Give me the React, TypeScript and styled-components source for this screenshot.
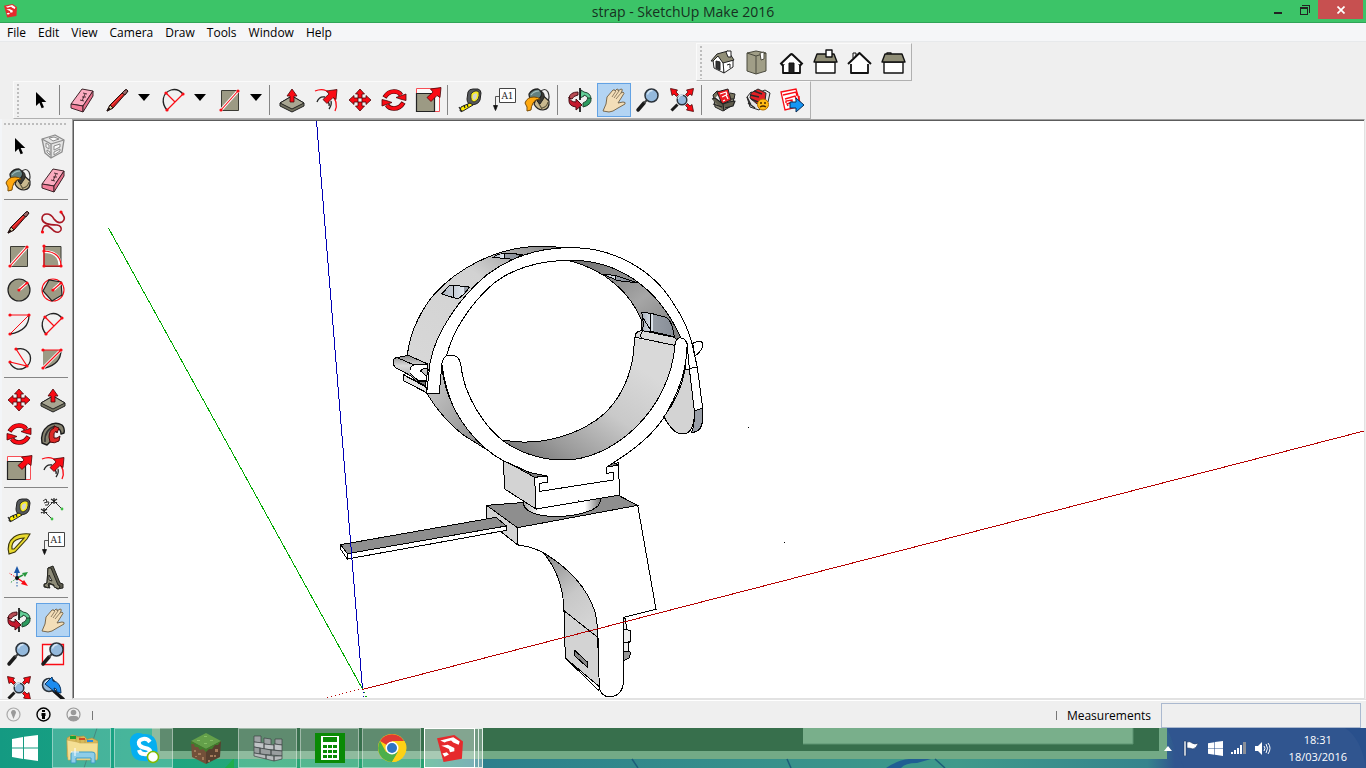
import React from "react";
import styled, { createGlobalStyle, css } from "styled-components";

const GlobalStyle = createGlobalStyle`
  * { box-sizing: border-box; }
  body { margin: 0; font-family: "Open Sans", "Noto Sans", sans-serif; color: #000; }
  button, input { font: inherit; color: inherit; }
  button { border: 0; padding: 0; background: none; }
`;

/* ---------- window frame ---------- */

const Screen = styled.div`
  display: flex;
  flex-direction: column;
  height: 100vh;
  overflow: hidden;
  background: #efefef;
`;

const TitleBar = styled.header`
  display: grid;
  grid-template-columns: 1fr auto 1fr;
  height: 23px;
  flex: none;
  background: #3cc468;
  border-bottom: 1px solid #2fa457;
`;

const TitleIcon = styled.div`
  padding: 4px 0 0 4px;
  line-height: 0;
`;

const Title = styled.h1`
  margin: 0;
  font-size: 14px;
  line-height: 23px;
  font-weight: 400;
  color: #16301f;
`;

const WindowButtons = styled.div`
  display: flex;
  justify-content: flex-end;
  align-items: flex-start;
  padding-right: 3px;
`;

const WindowButton = styled.button<{ $close?: boolean }>`
  display: grid;
  place-items: center;
  width: ${(p) => (p.$close ? 45 : 27)}px;
  height: 19px;
  background: ${(p) => (p.$close ? "#c75050" : "transparent")};
`;

const MenuBar = styled.nav`
  display: flex;
  flex: none;
  gap: 12px;
  height: 19px;
  padding-left: 7px;
  background: #f5f6f8;
  border-bottom: 1px solid #e7e9eb;
`;

const MenuItem = styled.button`
  font-size: 12px;
  line-height: 20px;
`;

/* ---------- toolbars ---------- */

const Toolbars = styled.div`
  flex: none;
  display: flex;
  flex-direction: column;
  align-items: flex-start;
  height: 77px;
  padding-top: 1px;
`;

const ToolbarBox = styled.div<{ $indent: number }>`
  display: flex;
  align-items: center;
  height: 38px;
  margin-left: ${(p) => p.$indent}px;
  padding: 0 1px 0 3px;
  background: #f1f1f1;
  border: 1px solid;
  border-color: #fafafa #b0b0b0 #b0b0b0 #fafafa;
`;

const dots = css<{ $across?: boolean }>`
  background: ${(p) =>
    p.$across
      ? "repeating-linear-gradient(90deg, #bdbdbd 0 2px, transparent 2px 4px)"
      : "repeating-linear-gradient(180deg, #bdbdbd 0 2px, transparent 2px 4px)"};
`;

const Grip = styled.div`
  ${dots}
  flex: none;
  width: 2px;
  height: 33px;
  margin-right: 4px;
`;

const SideGrip = styled.div`
  ${dots}
  height: 2px;
  margin: 4px 2px;
`;

const ToolButton = styled.button<{ $active?: boolean }>`
  display: grid;
  place-items: center;
  flex: none;
  width: 34px;
  height: 34px;
  border: 1px solid ${(p) => (p.$active ? "#62a2e4" : "transparent")};
  background: ${(p) => (p.$active ? "#b3d4f3" : "transparent")};
`;

const SplitTool = styled.div`
  display: flex;
  padding-left: 2px;
`;

const DropButton = styled.button`
  display: grid;
  place-items: center;
  width: 20px;
  height: 29px;
  padding-right: 2px;
`;

const Divider = styled.div`
  flex: none;
  width: 1px;
  height: 30px;
  margin: 0 5px 0 2px;
  background: #858585;
`;

const SideDivider = styled.div`
  height: 1px;
  margin: 2px 2px 5px;
  background: #858585;
`;

const Workspace = styled.main`
  display: flex;
  flex: 1;
  min-height: 0;
  border-bottom: 1px solid #e2e2e2;
`;

const Sidebar = styled.aside`
  flex: none;
  width: 72px;
  padding-right: 2px;
  overflow: hidden;
  background: #f1f1f1;
  border-left: 2px solid #f3f5f8;
`;

const ToolGrid = styled.div`
  display: grid;
  grid-template-columns: 34px 34px;
`;

const Viewport = styled.section`
  flex: 1;
  min-width: 0;
  margin-right: 1px;
  padding: 1px 0 0 1px;
  background: #fff;
  border: 1px solid;
  border-color: #a0a0a0 #e2e2e2 #e2e2e2 #a0a0a0;
  box-shadow: inset 1px 1px #5c5c5c;
`;

const Scene = styled.svg`
  display: block;
  width: 100%;
  height: 100%;
`;

/* ---------- status bar ---------- */

const StatusBar = styled.footer`
  display: flex;
  align-items: center;
  flex: none;
  height: 28px;
  padding: 2px 5px 0 6px;
  border-top: 1px solid #fff;
`;

const StatusGroup = styled.div`
  display: flex;
  align-items: center;
  gap: 15px;
  padding-bottom: 2px;
`;

const StatusButton = styled.button`
  width: 15px;
  height: 15px;
  line-height: 0;
`;

const Tick = styled.span`
  width: 1px;
  height: 9px;
  margin-left: 11px;
  background: #777;
`;

const MeasureLabel = styled.label`
  margin-left: auto;
  display: flex;
  align-items: center;
  gap: 10px;
  font-size: 12px;
`;

const MeasureInput = styled.input`
  width: 200px;
  height: 25px;
  border: 1px solid #abb9cf;
  background: #efefef;
`;

/* ---------- taskbar ---------- */

const Taskbar = styled.div`
  position: relative;
  display: flex;
  flex: none;
  height: 40px;
  overflow: hidden;
`;

const Wallpaper = styled.svg`
  position: absolute;
  inset: 0;
  width: 100%;
  height: 100%;
`;

const TaskList = styled.div`
  position: relative;
  display: flex;
  gap: 3px;
`;

const StartButton = styled.button`
  width: 49px;
  line-height: 0;
`;

const TaskButton = styled.button<{ $state: "idle" | "open" | "front" }>`
  display: grid;
  place-items: center;
  width: ${(p) => (p.$state === "front" ? 51 : 59)}px;
  height: 40px;
  border: 1px solid
    ${(p) => ({ idle: "transparent", open: "rgba(255,255,255,.4)", front: "#fff" })[p.$state]};
  background: ${(p) =>
    ({ idle: "transparent", open: "rgba(255,255,255,.2)", front: "rgba(255,255,255,.38)" })[p.$state]};
`;

const StackEdge = styled.div`
  width: 4px;
  height: 40px;
  margin-left: -3px;
  border: 1px solid #e3eee7;
  border-left: 0;
  background: rgba(255, 255, 255, 0.3);
`;

const Tray = styled.div`
  position: relative;
  display: flex;
  align-items: center;
  gap: 8px;
  margin-left: auto;
  padding-right: 19px;
`;

const TrayButton = styled.button`
  line-height: 0;
`;

const Clock = styled.time`
  margin-left: 10px;
  font-size: 11px;
  line-height: 17px;
  text-align: center;
  color: #fff;
`;

/* ---------- icons, all on a 24 unit grid ---------- */

const Glyph = styled.svg`
  overflow: visible;
`;

const Icon = ({ children, size = 24 }: { children: React.ReactNode; size?: number }) => (
  <Glyph width={size} height={size} viewBox="0 0 24 24" fill="none" aria-hidden="true">
    {children}
  </Glyph>
);

const RED = "#fa0b14";
const K = "#222";
const TAUPE = "#9c9a84";

const Dots = ({ at }: { at: [number, number][] }) => (
  <>
    {at.map(([x, y]) => (
      <circle key={`${x}-${y}`} cx={x} cy={y} r="1.6" fill={RED} />
    ))}
  </>
);

const ArrowHead = ({ d }: { d: string }) => <path d={d} fill={RED} stroke="#4a0508" strokeWidth=".8" />;

const Select = () => (
  <path d="M8 4v14l3.400-3.200 2.200 5.400 2.400-1-2.300-5.200h4.600z" fill="#000" />
);
const Eraser = () => (
  <g stroke="#3d2329" strokeWidth="1" strokeLinejoin="round">
    <path d="M1 16L12 1l11 2-10 15z" fill="#fbacc0" />
    <path d="M1 16l12 2v6L1 20z" fill="#f37f9a" />
    <path d="M23 3v5L13 24v-6z" fill="#e8708c" />
    <path d="M13 5l4 1M10 12l4 1M15 6l-3 7M12 9l4 0" strokeWidth=".9" />
  </g>
);
const Pencil = () => (
  <g stroke="#241212" strokeLinejoin="round">
    <path d="M1 23l3-6L19 2q2-1 3 1L7 20z" fill="#d31c1c" />
    <path d="M1 23l3-6 3 3z" fill="#d8cda0" />
    <path d="M19 2q2-1 3 1l-3 4-3-2z" fill="#9c6a6a" />
    <path d="M1 23l2-3 1 1z" fill="#111" />
    <path d="M6 17L17 6" stroke="#ff5a50" strokeWidth=".8" />
  </g>
);
const Pie = () => (
  <>
    <path d="M5 22C-1 15 0 5 9 2q7-2 12 4" stroke={K} strokeWidth="1.300" />
    <path d="M4 5l9 9M5 22L21 6" stroke={RED} strokeWidth="1.200" />
    <Dots at={[[4, 5], [21, 6], [5, 22]]} />
  </>
);
const Rect = () => (
  <>
    <path d="M3.500 2.500h17v20h-17z" fill={TAUPE} stroke="#3b3b34" />
    <path d="M3 22L20 3" stroke="#fff" strokeWidth="3" />
    <path d="M3 22L20 3" stroke={RED} strokeWidth="1.100" />
    <Dots at={[[3, 22], [20, 3]]} />
  </>
);
const PushPull = () => (
  <>
    <path d="M0 15l12-7 12 7v3l-12 6-12-6z" fill="#737260" stroke={K} />
    <path d="M0 15l12-7 12 7-12 6z" fill="#a8a692" stroke={K} />
    <ArrowHead d="M12 1l5 7h-3v6h-4V8H7z" />
  </>
);
const NorthEast = () => <ArrowHead d="M10 9.500L16 4l-2.500-3L24-.5 23 9.500 20 7.500 14 13.500z" />;
const Offset = () => (
  <>
    <path d="M1 3q9-4 16 3 8 8 4 17" stroke={RED} strokeWidth="1.300" />
    <path d="M3 14q2-6 8-5M17 13q1 4-2 8M10 12q6 1 5 6" stroke={K} strokeWidth="1.300" />
    <g transform="translate(-1 2)"><NorthEast /></g>
  </>
);
const Move = () => (
  <>
    {[0, 90, 180, 270].map((a) => (
      <g key={a} transform={`rotate(${a} 12 12)`}>
        <ArrowHead d="M12 1l4.500 5H14v4h-4V6H7.500z" />
      </g>
    ))}
  </>
);
const Rotate = () => (
  <>
    {[0, 180].map((a) => (
      <g key={a} transform={`rotate(${a} 12 12)`}>
        <path d="M2.500 9.500Q6 3.500 12 3.500q5 0 7 3.500" stroke="#4a0508" strokeWidth="4.600" />
        <path d="M3 9Q6 3.500 12 3.500q5 0 7 3.500" stroke={RED} strokeWidth="3.400" />
        <ArrowHead d="M14 9.500L24 6v6.500q-5-1-10-3z" />
      </g>
    ))}
  </>
);
const Scale = () => (
  <>
    <path d="M.5.5h23v23H.5z" fill="#fff" stroke={RED} opacity=".7" />
    <path d="M.5 5.500h18v18H.5z" fill={TAUPE} stroke={K} strokeWidth="1.200" />
    <g transform="translate(1 0)"><NorthEast /></g>
  </>
);
const Tape = () => (
  <g strokeLinejoin="round">
    <path d="M10 4q1-3 5-3l5 0q3 1 3 4l-1 7q-1 3-4 4l-4 1q-5-1-5-6z" fill="#55585c" stroke={K} />
    <path d="M13 6q4-5 8-2 1 8-5 10-4-1-3-8z" fill="#f7ec22" stroke={K} strokeWidth=".8" />
    <path d="M15 7q3-3 4-1 0 5-3 6-2-1-1-5z" fill="#d5d6d0" />
    <path d="M12 15l-9 4-1 4 3 0 10-6z" fill="#ffee00" stroke={K} />
    <path d="M1 19l3 5M6 17l1 3M9 16l1 3" stroke={K} strokeWidth="1.200" />
  </g>
);
const TextTool = () => (
  <>
    <path d="M7.500.5h16v14h-16z" fill="#fff" stroke="#444" />
    <path d="M7 8.500H3.500V18" stroke="#555" />
    <path d="M1.500 17.500h4l-2 5z" fill="#111" stroke="#111" strokeWidth=".8" />
    <text x="15.500" y="11" textAnchor="middle" fontFamily="DejaVu Serif, serif" fontSize="9" fill="#222">A1</text>
  </>
);
const Paint = () => (
  <g strokeLinejoin="round">
    <path d="M14 4q5-5 8 0 2 5 0 9" stroke="#333" strokeWidth="1.200" />
    <path d="M13 4l10 9q1 8-6 9-6 0-9-6z" fill="#c9b98f" stroke={K} strokeWidth="1.200" />
    <path d="M16 20q5-1 6-6M12 14l4 7" stroke="#5b543c" strokeWidth="1.200" />
    <path d="M3 6q3-5 9-5 4 2 4 6-3 5-9 6-4-2-4-7z" fill="#62807f" stroke={K} strokeWidth="1.300" />
    <path d="M5 7q3-4 8-4" stroke="#a8c0c0" strokeWidth="1.200" />
    <path d="M15 3q4 2 3 7l-4 6-3-3q6-4 4-10z" fill="#3a3a33" stroke={K} />
    <path d="M-1 15q2-6 9-6 4 0 6 2-5 0-7 4-2 4-2 7l-4 1q1-4-2-8z" fill="#ffa90f" stroke="#7a4a00" />
  </g>
);
const Orbit = () => (
  <g strokeLinejoin="round">
    <path d="M13 2l-1 8 4-2v-1q4 1 4 4h3Q23 5 16 4z" fill="#63cf98" stroke="#1d4630" />
    <path d="M23 10q1 7-8 9v-4q4-1 5-5z" fill="#2c9c5f" stroke="#1d4630" />
    <path d="M1 10q1-6 9-6v3q-5 1-6 4z" fill="#b84a52" stroke="#4a0c14" />
    <path d="M1 9q1 5 7 5v-3l6 6-6 5v-3q-7-1-7-6z" fill="#c4192e" stroke="#4a0c14" />
    <path d="M12 0v12M12 19v5" stroke="#111" strokeWidth="1.700" />
  </g>
);
const Hand = () => (
  <path d="M1 23l3-7 1-7 6-7q2-1 2 1l2-2q2 0 1 2l3-2q2 0 1 2l-1 2 2-1q2 1 0 3l-5 8 5-1q3 0 2 2l-7 4-5 3-4 1z" fill="#f3deb8" stroke="#7a6a50" strokeWidth="1" strokeLinejoin="round" />
);
const HandTool = () => (
  <>
    <Hand />
    <path d="M10 9l4-6M12 10l5-7M14 11l5-6" stroke="#7a6a50" strokeWidth=".8" />
  </>
);
const Lens = ({ x = 15.5, y = 7.5, r = 6.5 }: { x?: number; y?: number; r?: number }) => (
  <>
    <circle cx={x} cy={y} r={r} fill="#94b9dc" stroke="#2a323a" strokeWidth="1.500" />
    <path d={`M${x - 4} ${y - 1}q1-4 5-4`} stroke="#d5e6f5" strokeWidth="1.300" />
  </>
);
const Zoom = () => (
  <>
    <path d="M2 22l6-7" stroke="#1b1b1b" strokeWidth="3.500" strokeLinecap="round" />
    <path d="M8 15l4-4" stroke="#444" strokeWidth="2" />
    <Lens />
  </>
);
const ZoomWindow = () => (
  <>
    <path d="M1.500 2.500h21v20h-21z" fill="#fff" fillOpacity=".4" stroke={RED} strokeWidth="1.300" />
    <Zoom />
  </>
);
const ZoomExtents = () => (
  <>
    <path d="M1.500 22.500l6-6" stroke="#1b1b1b" strokeWidth="3" />
    <Lens x={12} y={12} r={4.8} />
    {[0, 90, 180].map((a) => (
      <g key={a} transform={`rotate(${a} 12 12)`}>
        <ArrowHead d="M.5.5l7 1.500L6 4l2.500 2.500-2 2L4 6 2 7.500z" />
      </g>
    ))}
  </>
);
const Previous = () => (
  <>
    <Lens x={8} y={9} r={6.5} />
    <path d="M13 15l9 8" stroke="#151515" strokeWidth="3.500" strokeLinecap="round" />
    <path d="M4 8l7-7 1 4q8 1 8 12l-4-1q0-4-3-4l1 4z" fill="#1b8cf0" stroke="#0b3562" strokeLinejoin="round" />
  </>
);
const Component = () => (
  <g stroke="#8d8d8d" strokeWidth="1.300" strokeLinejoin="round" fill="#e4e4e4">
    <path d="M1 5l13-4 9 5-2 12-11 6-6-5z" />
    <path d="M1 5l9 5 13-4M10 10v14" />
    <path d="M5 9l3 2v4l-3-2zM6 16l3 2v3l-3-3zM13 12l6-2v3l-6 3zM13 18l6-3v2l-6 4zM8 4l5-1 5 2-6 2z" fill="#fafafa" strokeWidth="1" />
  </g>
);
const Freehand = () => (
  <>
    <path d="M1 22q1-8 6-6 3 2 6 5 5 3 7-1 1-4-4-5Q2 15 1 9q0-5 5-5 4 0 7 5 4 5 8 3 4-3 1-7l-2-3" stroke="#a81622" strokeWidth="1.600" />
    <Dots at={[[1.5, 22], [20, 2]]} />
  </>
);
const RotRect = () => (
  <>
    <path d="M3 2.500h17v20H3z" fill={TAUPE} stroke="#3b3b34" />
    <path d="M3 7.500q16 0 16 14" stroke="#fff" strokeWidth="3" />
    <path d="M3 2v20h17q0-14-17-15" stroke={RED} strokeWidth="1.200" />
    <Dots at={[[3, 2], [3, 7], [3, 22], [20, 22]]} />
  </>
);
const Circle = () => (
  <>
    <circle cx="12" cy="12" r="11" fill={TAUPE} stroke={K} strokeWidth="1.200" />
    <path d="M12 12l8-7" stroke="#fff" strokeWidth="3" />
    <path d="M12 12l8-7" stroke={RED} strokeWidth="1.200" />
    <Dots at={[[12, 12], [20, 5]]} />
  </>
);
const Polygon = () => (
  <>
    <circle cx="12" cy="12" r="11" stroke={RED} strokeWidth="1.100" />
    <path d="M20 4l1 13-10 6L2 13 8 2z" fill={TAUPE} stroke={K} strokeWidth="1.200" />
    <path d="M12 12l8-7" stroke="#fff" strokeWidth="3" />
    <path d="M12 12l8-7" stroke={RED} strokeWidth="1.200" />
    <Dots at={[[12, 12], [20, 5]]} />
  </>
);
const Arc = () => (
  <>
    <path d="M22 3q0 16-19 19" stroke={K} strokeWidth="1.300" />
    <path d="M3 3h19L3 22" stroke={RED} />
    <Dots at={[[3, 3], [22, 3], [3, 22]]} />
  </>
);
const Arc3 = () => (
  <>
    <path d="M10 3q9-2 13 6 2 7-3 11-4 4-10 3-5-2-7-6" stroke={K} strokeWidth="1.300" />
    <path d="M3 16l17 4L9 3" stroke={RED} strokeWidth="1.200" />
    <Dots at={[[3, 16], [20, 20], [9, 3]]} />
  </>
);
const PieFill = () => (
  <>
    <path d="M2 4h18q0 14-16 18H2z" fill={TAUPE} />
    <path d="M20 4q0 14-16 18" stroke={K} strokeWidth="1.300" />
    <path d="M2 22L20 4" stroke="#fff" strokeWidth="3" />
    <path d="M2 22L20 4H2" stroke={RED} strokeWidth="1.200" />
    <Dots at={[[2, 22], [20, 4], [2, 4]]} />
  </>
);
const FollowMe = () => (
  <g strokeLinejoin="round">
    <path d="M1 21Q-1 10 7 4q7-5 14-1 3 3 2 8l-3 1q0-6-5-5-6 2-5 12l-4 4z" fill="#86826f" stroke="#1c1c1c" strokeWidth="1.400" />
    <path d="M4 20Q3 8 14 4" stroke="#333" strokeWidth="1.500" />
    <path d="M8 15q0-7 5-9l0-2 5 2-2 5-1-2q-3 2-2 7l3 0 3-2-1 5q-5 3-9 1z" fill="#dd2a26" stroke="#4a0508" />
  </g>
);
const Dimension = () => (
  <>
    <path d="M3 13L13 3M3 13l8 8M13 3l8 8" stroke="#333" />
    <path d="M0 11l6 4M0 15l6-4M10 1l6 4M10 5l6-4M3 10v6M13 0v6" stroke="#222" strokeWidth="1.200" />
    <path d="M2 3l3-2 1 3-3 1M5 4l3 0-1 3-3 0" stroke="#333" />
    <circle cx="11" cy="21" r="1.400" fill="#3dbd43" />
    <circle cx="21" cy="11" r="1.400" fill="#3dbd43" />
  </>
);
const Protractor = () => (
  <path d="M2 22Q-1 11 7 5q6-4 16-3l-3 5L8 20l-6 2zM5 17q-1-6 4-9 4-2 8-2L7 17z" fill="#e8d92f" fillRule="evenodd" stroke="#3b3608" strokeWidth="1.100" />
);
const Axes = () => (
  <>
    <path d="M10 12V5" stroke="#1b57a8" strokeWidth="1.600" />
    <path d="M10 0l3 7H7z" fill="#1b57a8" />
    <path d="M10 12l6-3" stroke="#27963d" strokeWidth="1.500" />
    <path d="M21 6l-3 5-3-4z" fill="#27963d" />
    <path d="M10 12l6 4" stroke={RED} strokeWidth="1.500" />
    <path d="M21 20l-7-2 3-4z" fill={RED} />
    <path d="M10 13v9" stroke="#1b57a8" strokeDasharray="1.500 1.500" />
    <path d="M10 12L2 7" stroke={RED} strokeDasharray="1.500 1.500" />
    <path d="M10 12l-7 5" stroke="#27963d" strokeDasharray="1.500 1.500" />
    <circle cx="10" cy="12" r="2" fill="#111" />
  </>
);
const Text3D = () => (
  <g stroke="#24241f" strokeLinejoin="round">
    <path d="M7 2l5-2 7 17 3 1v4l-6 1-2-3-5-2-1 2 1 2-6-1v-3l3-1z" fill="#5b5a4d" />
    <path d="M7 2h3l7 17 2 1-1 3-5-2v-2l-5-2-1 2 1 1-1 2-4-2 1-2 2-1z" fill="#8d8b78" />
    <path d="M8 9l3 6-3-1z" fill="#f1f1f1" />
  </g>
);

const HouseIso = () => (
  <g stroke={K} strokeLinejoin="round">
    <path d="M2 10l5-6 6 6v13L3 18z" fill="#fff" />
    <path d="M12 12l10-2v7l-9 6z" fill="#fff" />
    <path d="M0 11l6-7L17 1l6 9-11 3L7 6l-5 5z" fill="#918f78" />
    <path d="M15 2l1-1 4 0v6h-3z" fill="#fff" />
    <path d="M5 18v-7l4 1v8z" fill="#333" />
    <path d="M16 15l3-1v4" />
  </g>
);
const HouseTop = () => (
  <g stroke="#4a4a3e" strokeLinejoin="round">
    <path d="M2 3l9-2 10 2v18l-10 3-9-3z" fill="#a09e87" />
    <path d="M2 3l9 3 10-3M11 6v18" />
    <path d="M15 3l4-1v7l-3 1z" fill="#fff" />
  </g>
);
const HouseFront = () => (
  <g stroke="#111" strokeLinejoin="round">
    <path d="M4 12v11h17V12" fill="#fff" strokeWidth="1.800" />
    <path d="M2 15L12.500 5 23 15" stroke="#111" strokeWidth="4" />
    <path d="M4 14l8.500-8 8.500 8" fill="#fff" stroke="#fff" strokeWidth="1.300" />
    <path d="M10 13h5v10h-5z" fill="#222" />
  </g>
);
const HouseRight = () => (
  <g stroke="#111" strokeWidth="1.400" strokeLinejoin="round">
    <path d="M3 12h19v11H3z" fill="#fff" />
    <path d="M4 4h17l3 8H1z" fill="#8f8d76" />
    <path d="M13 0h6v7h-6z" fill="#fff" />
  </g>
);
const HouseBack = () => (
  <g stroke="#111" strokeWidth="1.800" strokeLinejoin="round">
    <path d="M6 8V3h3v3" strokeWidth="1" />
    <path d="M4 13v10h17V13" fill="#fff" />
    <path d="M1 14L12.500 3 24 14" fill="#fff" strokeWidth="2" />
    <path d="M5 12h15v3H5z" fill="#fff" stroke="none" />
  </g>
);
const HouseLeft = () => (
  <g stroke="#111" strokeWidth="1.400" strokeLinejoin="round">
    <path d="M3 12h19v11H3z" fill="#fff" />
    <path d="M4 4h17l3 8H1z" fill="#8f8d76" />
    <path d="M6 4V3h4v1" fill="#777" />
  </g>
);
const Warehouse = () => (
  <g stroke="#222" strokeLinejoin="round">
    <path d="M2 11l7 3 13-6-1 9-10 6-8-4z" fill="#8c8977" />
    <path d="M2 11L1 7l4-4 4 1M18 5l5 1-1 5-4 0" fill="#77745f" />
    <path d="M5 4l11-3 3 11-9 4z" fill="#ee1c23" />
    <path d="M8 6l6-2 1 3M10 9l4-2 2 4M11 13l2-1" stroke="#fff" strokeWidth="1.300" />
    <path d="M0 11l3-1 8 6 1 7M1 16l9 3M11 16l6-2 6-1-2 5-8 2" fill="#5e5b4b" strokeWidth="1.200" />
  </g>
);
const Extension = () => (
  <>
    <g stroke="#292929" strokeLinejoin="round">
      <path d="M1 9l4-5 5 2 9-4 5 3-2 9-9 8-9-3z" fill="#e5e5e5" />
      <path d="M5 5l7-4 8 4-1 8-8 3-7-6z" fill="#e32025" />
      <path d="M4 7l9 2M8 3l8 3M5 11l7 3M2 15l7 5M1 9l4 8" strokeWidth="1.400" />
    </g>
    <circle cx="17" cy="16.500" r="5.500" fill="#ffbb14" stroke="#b06d00" />
    <path d="M14 15h2M18 15h2M14 19q3-2 6 0" stroke="#4a2b00" strokeWidth="1.300" />
  </>
);
const Layout = () => (
  <>
    <path d="M1 4l15-3 5 17-16 4z" fill="#fff" stroke={RED} strokeWidth="1.300" />
    <path d="M3 7l13-3 1 4M5 11l10-3 2 5M6 15v-2l6-1v5M8 18l-1-2 3-1M19 8v8" stroke={RED} strokeWidth="1.400" />
    <path d="M10 14h6v-4l8 7-8 7v-4h-6z" fill="#1696f5" stroke="#0a2b52" />
  </>
);
const SketchUpMark = () => (
  <>
    <path d="M0 3L16 0l8 6-1 16L6 25z" fill="#e62a2c" />
    <path d="M3 5l12-3 6 4-1 3-5-2-2-2-4 1-2 1z" fill="#fff" />
    <path d="M4 10l6-1 6 3v3l-4 1-1-3-4-2z" fill="#fff" />
    <path d="M5 17l4-1 2 2-4 2z" fill="#fff" />
  </>
);

/* ---------- tool lists ---------- */

type Tool = [string, React.ComponentType];

const viewTools: Tool[] = [
  ["Iso", HouseIso], ["Top", HouseTop], ["Front", HouseFront],
  ["Right", HouseRight], ["Back", HouseBack], ["Left", HouseLeft],
];
const drawTools: Tool[] = [["Line", Pencil], ["Arc", Pie], ["Rectangle", Rect]];
const mainGroups: Tool[][] = [
  [["Push/Pull", PushPull], ["Offset", Offset], ["Move", Move], ["Rotate", Rotate], ["Scale", Scale]],
  [["Tape Measure", Tape], ["Text", TextTool], ["Paint Bucket", Paint]],
  [["Orbit", Orbit], ["Pan", HandTool], ["Zoom", Zoom], ["Zoom Extents", ZoomExtents]],
  [["3D Warehouse", Warehouse], ["Extension Warehouse", Extension], ["Send to LayOut", Layout]],
];
const sideGroups: Tool[][] = [
  [["Select", Select], ["Make Component", Component], ["Paint Bucket", Paint], ["Eraser", Eraser]],
  [
    ["Line", Pencil], ["Freehand", Freehand], ["Rectangle", Rect], ["Rotated Rectangle", RotRect],
    ["Circle", Circle], ["Polygon", Polygon], ["Arc", Arc], ["2 Point Arc", Pie],
    ["3 Point Arc", Arc3], ["Pie", PieFill],
  ],
  [
    ["Move", Move], ["Push/Pull", PushPull], ["Rotate", Rotate],
    ["Follow Me", FollowMe], ["Scale", Scale], ["Offset", Offset],
  ],
  [
    ["Tape Measure", Tape], ["Dimensions", Dimension], ["Protractor", Protractor],
    ["Text", TextTool], ["Axes", Axes], ["3D Text", Text3D],
  ],
  [
    ["Orbit", Orbit], ["Pan", HandTool], ["Zoom", Zoom],
    ["Zoom Window", ZoomWindow], ["Zoom Extents", ZoomExtents], ["Previous", Previous],
  ],
];

const ToolItem = ({ tool: [name, Art] }: { tool: Tool }) => (
  <ToolButton type="button" aria-label={name} $active={name === "Pan"}>
    <Icon><Art /></Icon>
  </ToolButton>
);

/* ---------- the model ---------- */

const Line = ({ d, fill = "none" }: { d: string; fill?: string }) => (
  <path d={d} fill={fill} stroke="#000" strokeWidth="1" vectorEffect="non-scaling-stroke" />
);

const Model = () => (
  <Scene viewBox="74 121 1290 577" preserveAspectRatio="xMidYMid meet" shapeRendering="crispEdges" role="img" aria-label="Strap model">
    <defs>
      <linearGradient id="inside" x1="0" y1="1" x2=".75" y2=".2">
        <stop offset="0" stopColor="#686868" />
        <stop offset=".3" stopColor="#9a9a9a" />
        <stop offset=".65" stopColor="#c9c9c9" />
        <stop offset="1" stopColor="#d9d9d9" />
      </linearGradient>
      <linearGradient id="outside" x1="0" y1="1" x2="1" y2="0">
        <stop offset="0" stopColor="#d8d8d8" />
        <stop offset=".6" stopColor="#d2d2d2" />
        <stop offset="1" stopColor="#7d7d7d" />
      </linearGradient>
      <linearGradient id="upper" x1="0" y1="0" x2="1" y2="1">
        <stop offset="0" stopColor="#6c6c6c" />
        <stop offset=".55" stopColor="#a6a6a6" />
        <stop offset="1" stopColor="#787878" />
      </linearGradient>
      <linearGradient id="under" x1="0" y1="0" x2="1" y2="1">
        <stop offset="0" stopColor="#cfcfcf" />
        <stop offset="1" stopColor="#868686" />
      </linearGradient>
      <linearGradient id="knob" x1="0" y1="0" x2="1" y2="0">
        <stop offset="0" stopColor="#aaa" />
        <stop offset=".2" stopColor="#fff" />
        <stop offset=".8" stopColor="#fff" />
        <stop offset="1" stopColor="#777" />
      </linearGradient>
      <linearGradient id="curve" x1="0" y1="0" x2=".5" y2="1">
        <stop offset="0" stopColor="#888" />
        <stop offset=".6" stopColor="#c8c8c8" />
        <stop offset="1" stopColor="#d4d4d4" />
      </linearGradient>
      <linearGradient id="steel" x1="0" y1="0" x2="1" y2="0">
        <stop offset="0" stopColor="#a9b0ba" />
        <stop offset=".35" stopColor="#dfe6ee" />
        <stop offset=".36" stopColor="#969ca5" />
        <stop offset="1" stopColor="#878d96" />
      </linearGradient>
      <linearGradient id="roll" x1="0" y1="0" x2="0" y2="1">
        <stop offset="0" stopColor="#8a8a8a" />
        <stop offset=".4" stopColor="#dadada" />
        <stop offset="1" stopColor="#9c9c9c" />
      </linearGradient>
    </defs>

    {/* bracket, arm and slot below the ring */}
    <g transform="translate(330 430) scale(.33333)">
      <Line d="M880 565h6l4 33 12 5 0 32-7 3v25l7 5-4 15-19 10z" fill="#eee" />
      <path d="M882 665h20l-6 18-14 8z" fill="#999" />
      <Line d="M880 598h12M902 635l-22 3M896 663l-16 3" />
      <Line d="M470 226L865 196l58 30L562 293z" fill="#8e8e8e" />
      <Line d="M470 226l92 67v51l-48-38-44-42z" fill="#d3d3d3" />
      <Line d="M562 293L923 226 978 538 880 562 882 745Q880 800 838 800 812 800 807 770L804 622Q800 470 640 368 600 348 567 346L562 343z" fill="#fff" />
      <Line d="M640 368Q760 440 795 545 804 585 803 622L702 542Q700 440 640 368z" fill="url(#curve)" />
      <Line d="M702 542l101 80 5 148-102-86z" fill="#d3d3d3" />
      <Line d="M735 662l37 34v16l-37-34z" fill="#888" />
      <Line d="M706 684l101 98" />
      <Line d="M580 215q-2 30 58 42 80 8 140-14 38-14 32-38z" fill="url(#knob)" />
      <Line d="M32 344L498 262l31 26L52 371z" fill="#8e8e8e" />
      <Line d="M32 344l20 27v17L32 358zM52 371L529 288v13L52 387z" fill="#fff" />
      <Line d="M520 90l95 52 3 95-94-60z" fill="#d3d3d3" />
      <Line d="M614 142L652 138 850 103 865 98 869 195 618 237z" fill="#fff" />
      <Line d="M560 112l92 25-38 5zM835 104l15-7 15 8-30 6z" fill="#808080" />
    </g>

    {/* the two straps of the ring */}
    <g transform="translate(380 230) scale(.33333)">
      <Line d="M82 375C90 300 130 230 165 190 225 125 340 50 480 49L575 53 575 65 440 90 322 152 230 262 165 400 140 425z" fill="url(#outside)" />
      <Line d="M140 490Q190 570 250 615L325 662 260 590Q190 500 185 400z" fill="url(#under)" />
      <Line d="M565 91C700 88 830 160 903 325L883 346 786 305 785 270C750 190 680 120 565 91z" fill="url(#upper)" />
      <path d="M763 325L890 345 884 450 850 530 770 625 680 680 553 700 400 665 370 630C470 650 600 620 680 545 740 480 763 400 763 325z" fill="url(#inside)" />
      <Line d="M370 630C470 650 600 620 680 545 740 480 763 400 763 325" />
      <Line d="M785 247l28 3 45 12q18 8 25 58l-70-16-25 0q4-30-3-57z" fill="url(#steel)" />
      <Line d="M813 250v56M788 262l25 40" />
      <Line d="M765 322q0-20 22-20l96 20q14 8 0 24l-95-20z" fill="#d9d9d9" />
      <Line d="M787 304q-10 16 0 22" />
      <Line d="M670 133l36 3 64 22-57-6z" fill="url(#steel)" />
      <Line d="M706 136v15" />
      <Line d="M340 82q15-14 50-11l38 2-28 15z" fill="url(#steel)" />
      <Line d="M373 71v14M185 192l25-27 58 6q-12 20-34 36z" fill="url(#steel)" />
      <Line d="M220 165v40" />

      <Line d="M185 400Q187 375 210 375 236 375 242 400C250 500 320 600 380 640 430 672 490 690 553 690 700 690 870 540 885 345Q888 322 906 322 924 328 921 350C920 430 890 500 850 565 820 610 770 655 700 698L680 712 680 730 700 727 700 750 480 784 480 760 502 757 502 738 450 728 370 692C290 650 225 560 205 490Q190 445 185 400z" fill="#fff" />
      <Line d="M140 490L150 400C165 310 240 200 320 135 390 82 470 52 575 53 700 52 820 120 880 220 910 265 930 310 938 350L952 412 928 415 921 340Q912 320 903 325C830 160 700 88 565 91 480 92 390 115 330 170 270 225 220 300 200 375Q183 390 184 420L178 490z" fill="#fff" />

      <Line d="M915 418h13l15 122q2 72-35 72-30 0-56-52 50-65 63-142z" fill="#d3d3d3" />
      <Line d="M928 415l24-3 16 123-25 7z" fill="#fff" />
      <Line d="M943 542l25-7v35q-2 35-33 38 10-30 8-66z" fill="#9a9fa8" />
      <Line d="M938 340q23-12 30 0 2 20-23 38z" fill="#fff" />
      <Line d="M921 360l-6 58" />

      <Line d="M70 433l70 40v15l-70-36z" fill="#e4e4e4" />
      <Line d="M78 440l30 13h30v15z" fill="#777" />
      <Line d="M40 395q0-12 12-12l33-7 58 26-3 52h-30l-20-18-42-22q-8-6-8-19z" fill="url(#roll)" />
      <Line d="M52 383l50 22" />
      <Line d="M90 430q-2-22 12-25l40-2v12q-18 0-20 8l18 16v14h-24z" fill="#fff" />
    </g>

    {/* drawing axes */}
    <path d="M316.500 121L362.500 689" stroke="#0000b4" />
    <path d="M108.500 228L362.500 689" stroke="#00a800" />
    <path d="M362.500 689.500L1364 431" stroke="#b40000" />
    <path d="M327 698l35-9" stroke="#b40000" strokeDasharray="1 3" />
    <path d="M363.500 692v6" stroke="#0000b4" strokeDasharray="1 3" />
    <path d="M364.500 692l2 6" stroke="#00a800" strokeDasharray="1 3" />
    <path d="M748 427.500h1M784 542.500h1M578 500.500h1" stroke="#000" />
  </Scene>
);

/* ---------- taskbar art ---------- */

const TaskbarBackdrop = () => (
  <Wallpaper viewBox="0 0 1366 40" preserveAspectRatio="none" aria-hidden="true">
    <defs>
      <linearGradient id="desk" x1="0" y1="0" x2="1366" y2="0" gradientUnits="userSpaceOnUse">
        <stop offset="0" stopColor="#149a82" />
        <stop offset=".11" stopColor="#1aa583" />
        <stop offset=".2" stopColor="#2aa876" />
        <stop offset=".31" stopColor="#27a172" />
        <stop offset=".35" stopColor="#2b7f8c" />
        <stop offset=".55" stopColor="#36908b" />
        <stop offset=".7" stopColor="#3f9a8b" />
        <stop offset=".84" stopColor="#35848d" />
        <stop offset=".86" stopColor="#30558f" />
        <stop offset="1" stopColor="#315793" />
      </linearGradient>
    </defs>
    <path d="M0 0h1366v40H0z" fill="url(#desk)" />
    <path d="M97 0L84 40" stroke="#186b60" />
    <path d="M225 40l9-10v10z" fill="#1fae4d" />
    <path d="M152 0h1015v31H152z" fill="#73aa86" />
    <path d="M160 0h999v23H160z" fill="#376f4c" />
    <path d="M803 0h330v16H803z" fill="#79af8b" />
    <path d="M803 16h330V0" stroke="#5c9370" fill="none" />
    <path d="M632 31l6 9M787 31l4 9M935 31l10 9" stroke="#1b5e79" strokeWidth="1.500" />
    <path d="M886 40q12-8 23-9h22l-14 4q-12 0-16 5z" fill="#1f5f93" />
    <path d="M1167 0h199v40h-182z" fill="#30558f" />
    <path d="M1345 0q16 10 21 40V0z" fill="#29508c" />
  </Wallpaper>
);

const Big = ({ children }: { children: React.ReactNode }) => (
  <svg width="32" height="32" viewBox="0 0 32 32" fill="none" aria-hidden="true">{children}</svg>
);

const WindowsLogo = ({ size }: { size: number }) => (
  <svg width={size} height={size} viewBox="0 0 26 26" fill="#fff" aria-hidden="true">
    <path d="M0 4l11-2v10.500H0zM12 1.800L26 0v12.500H12zM0 13.500h11V24L0 22zM12 13.500h14V26l-14-2z" />
  </svg>
);

const Folder = () => (
  <Big>
    <path d="M1 6l5-3 8 2v20H1zM10 5l8-1 4 4v18H10zM19 8l7-2 6 3v18H19z" fill="#d7b95b" stroke="#b0923c" strokeWidth=".6" />
    <path d="M4 4h6v3H4z" fill="#18a030" /><path d="M13 6h6v2h-6z" fill="#cf4a25" /><path d="M21 8h6v2h-6z" fill="#2a8adf" />
    <path d="M1 8l10 2 3 1 18 0-1 17H2z" fill="#f4df94" stroke="#c9aa50" strokeWidth=".6" />
    <path d="M5 31V22q0-2 2-2h19q3 0 3 2v9h-4v-5H10v5z" fill="#8ecde8" stroke="#3f9cc4" />
    <path d="M9 16v8M5 20h8" stroke="#fff" />
  </Big>
);
const Skype = () => (
  <Big>
    <path d="M9 1a10 10 0 016 1q13-1 14 12 3 17-13 15Q3 29 3 16-1 4 9 1z" fill="#05aff0" />
    <path d="M22 10q-3-4-7-3-5 1-4 5 1 3 6 4t5 3q-1 4-6 3-4 0-5-4" stroke="#fff" strokeWidth="4" />
    <circle cx="25" cy="25" r="5.500" fill="#fff" stroke="#7fba00" strokeWidth="1.500" />
  </Big>
);
const GrassBlock = () => (
  <Big>
    <path d="M1 9l15 8v15L2 25z" fill="#735039" />
    <path d="M16 17l15-8-1 16-14 7z" fill="#58402f" />
    <path d="M1 9L16 1l15 8-15 8z" fill="#64a04a" />
    <path d="M1 9v3l3 0 1 3 3 0 2 3 3-1 3 3 3-3 3 0 3-4 3 0 3-4V9l-15 8z" fill="#427d2c" />
    <path d="M4 18h2v2H4zM8 21h3v2H8zM12 25h2v3h-2zM5 24h2v1H5zM20 23h3v2h-3zM25 17h3v3h-3zM18 28h2v2h-2zM24 23h2v2h-2z" fill="#a37a5a" />
    <path d="M7 8h3v1H7zM14 4h3v1h-3zM20 8h3v1h-3zM14 11h3v1h-3z" fill="#85c065" />
  </Big>
);
const StoneWall = () => (
  <Big>
    <g stroke="#3c4244" strokeWidth=".7">
      <path d="M2 4l7 0v7l-7-1zM12 6l7 1v6l-7-1zM23 7h7v6l-7-1z" fill="#9ea3a5" />
      <path d="M2 10l10 1v6L2 15zM12 12l10 1v5l-10-1zM22 12l8 1v6l-8-1z" fill="#c0c4c6" />
      <path d="M2 15l6 1v6l-6-1zM8 16l11 2v5l-11-1zM19 18l11 1v5l-11-1z" fill="#999e9f" />
      <path d="M2 21l12 2v4L2 24zM14 23l8 1v5l-8-2zM22 24l8 0v3l-8 2z" fill="#b7bbbc" />
    </g>
  </Big>
);
const Calculator = () => (
  <Big>
    <path d="M1 1h30v30H1z" fill="#0a8a05" />
    <path d="M7 4h18v24H7z" fill="#fff" />
    <path d="M9 5h14v5H9z" fill="#0a8a05" />
    {[13, 18, 23].map((y) => [9, 14, 19].map((x) => (
      <rect key={`${x}-${y}`} x={x} y={y} width="4" height="3" fill="#0a8a05" />
    )))}
  </Big>
);
const Chrome = () => (
  <Big>
    <circle cx="16" cy="16" r="14" fill="#fdd116" />
    <path d="M16 16L4 9A14 14 0 0128 9z" fill="#df3b32" />
    <path d="M4 9A14 14 0 0016 30l6-10-12 0z" fill="#4caf4a" />
    <path d="M28.500 9H16v7l6 4-6 10A14 14 0 0028.500 9z" fill="#fdd116" />
    <circle cx="16" cy="16" r="6.500" fill="#fff" />
    <circle cx="16" cy="16" r="5" fill="#2f74c4" />
  </Big>
);

const tasks: { name: string; state: "idle" | "open" | "front"; art: React.ReactNode }[] = [
  { name: "File Explorer", state: "open", art: <Folder /> },
  { name: "Skype", state: "open", art: <Skype /> },
  { name: "Minecraft", state: "idle", art: <GrassBlock /> },
  { name: "Stone wall", state: "open", art: <StoneWall /> },
  { name: "Calculator", state: "open", art: <Calculator /> },
  { name: "Chrome", state: "open", art: <Chrome /> },
  { name: "SketchUp", state: "front", art: <Icon size={26}><SketchUpMark /></Icon> },
];

const menus = ["File", "Edit", "View", "Camera", "Draw", "Tools", "Window", "Help"];

export default function App() {
  return (
    <Screen>
      <GlobalStyle />
      <TitleBar>
        <TitleIcon><Icon size={13}><SketchUpMark /></Icon></TitleIcon>
        <Title>strap - SketchUp Make 2016</Title>
        <WindowButtons>
          <WindowButton type="button" aria-label="Minimize">
            <svg width="10" height="10" viewBox="0 0 10 10"><path d="M1 7h8v2H1z" fill="#222" /></svg>
          </WindowButton>
          <WindowButton type="button" aria-label="Restore">
            <svg width="10" height="10" viewBox="0 0 10 10" shapeRendering="crispEdges">
              <path d="M0 2h8v8H0zM1 4v5h6V4zM2 0h8v8H9V1H2z" fill="#222" fillRule="evenodd" />
            </svg>
          </WindowButton>
          <WindowButton type="button" aria-label="Close" $close>
            <svg width="8" height="8" viewBox="0 0 8 8"><path d="M.5.5l7 7M7.500.5l-7 7" stroke="#fff" strokeWidth="1.700" /></svg>
          </WindowButton>
        </WindowButtons>
      </TitleBar>

      <MenuBar>
        {menus.map((m) => <MenuItem key={m} type="button">{m}</MenuItem>)}
      </MenuBar>

      <Toolbars>
        <ToolbarBox $indent={696} role="toolbar" aria-label="Views">
          <Grip />
          {viewTools.map((t) => <ToolItem key={t[0]} tool={t} />)}
        </ToolbarBox>
        <ToolbarBox $indent={13} role="toolbar" aria-label="Getting Started">
          <Grip />
          <ToolItem tool={["Select", Select]} />
          <Divider />
          <ToolItem tool={["Eraser", Eraser]} />
          {drawTools.map((t) => (
            <SplitTool key={t[0]}>
              <ToolItem tool={t} />
              <DropButton type="button" aria-label={`${t[0]} options`}>
                <svg width="12" height="7" viewBox="0 0 12 7"><path d="M0 0h12L6 7z" fill="#000" /></svg>
              </DropButton>
            </SplitTool>
          ))}
          {mainGroups.map((group, i) => (
            <React.Fragment key={i}>
              <Divider />
              {group.map((t) => <ToolItem key={t[0]} tool={t} />)}
            </React.Fragment>
          ))}
        </ToolbarBox>
      </Toolbars>

      <Workspace>
        <Sidebar>
          <SideGrip $across />
          {sideGroups.map((group, i) => (
            <React.Fragment key={i}>
              {i > 0 && <SideDivider />}
              <ToolGrid>{group.map((t) => <ToolItem key={t[0]} tool={t} />)}</ToolGrid>
            </React.Fragment>
          ))}
        </Sidebar>
        <Viewport><Model /></Viewport>
      </Workspace>

      <StatusBar>
        <StatusGroup>
          <StatusButton type="button" aria-label="Geo-location">
            <svg width="15" height="15" viewBox="0 0 15 15" fill="none"><circle cx="7.500" cy="7.500" r="6.500" stroke="#aaa" strokeWidth="1.200" /><path d="M7.500 3a2.500 2.500 0 012 4l-2 5-2-5a2.500 2.500 0 012-4z" fill="#999" /></svg>
          </StatusButton>
          <StatusButton type="button" aria-label="Credits">
            <svg width="15" height="15" viewBox="0 0 15 15" fill="none"><circle cx="7.500" cy="7.500" r="6.500" stroke="#000" strokeWidth="1.400" /><path d="M5.500 6h4v3H9v3H6V9h-.5zM6 3h3v2H6z" fill="#000" /></svg>
          </StatusButton>
          <StatusButton type="button" aria-label="Sign in">
            <svg width="15" height="15" viewBox="0 0 15 15" fill="none"><circle cx="7.500" cy="7.500" r="6.500" stroke="#999" strokeWidth="1.200" /><circle cx="7.500" cy="5.500" r="2.800" fill="#999" /><path d="M2.500 12q0-3 3-3h4q3 0 3 3-5 4-10 0z" fill="#999" /></svg>
          </StatusButton>
        </StatusGroup>
        <Tick />
        <MeasureLabel>
          <Tick />
          Measurements
          <MeasureInput type="text" />
        </MeasureLabel>
      </StatusBar>

      <Taskbar>
        <TaskbarBackdrop />
        <TaskList>
          <StartButton type="button" aria-label="Start"><WindowsLogo size={26} /></StartButton>
          {tasks.map((t) => (
            <TaskButton key={t.name} type="button" aria-label={t.name} $state={t.state}>{t.art}</TaskButton>
          ))}
          <StackEdge />
          <StackEdge />
        </TaskList>
        <Tray>
          <TrayButton type="button" aria-label="Show hidden icons">
            <svg width="8" height="5" viewBox="0 0 8 5"><path d="M4 0l4 5H0z" fill="#fff" /></svg>
          </TrayButton>
          <TrayButton type="button" aria-label="Action Center">
            <svg width="20" height="16" viewBox="0 0 20 16"><path d="M4 1h2v15H4zM7 2q3-1 5 1 3 2 6 0-1 5-5 6-3-1-6-1z" fill="#fff" stroke="#1c3560" strokeWidth=".6" /></svg>
          </TrayButton>
          <TrayButton type="button" aria-label="Windows Update"><WindowsLogo size={15} /></TrayButton>
          <TrayButton type="button" aria-label="Network">
            <svg width="16" height="14" viewBox="0 0 16 14">
              <path d="M0 11h2v2H0zM3 9h2v4H3zM6 7h2v6H6zM9 4h2v9H9z" fill="#fff" /><path d="M12 1h3v12h-3z" fill="#8a8f98" />
            </svg>
          </TrayButton>
          <TrayButton type="button" aria-label="Volume">
            <svg width="16" height="15" viewBox="0 0 16 15" fill="none">
              <path d="M0 5h3l4-4v13l-4-4H0z" fill="#fff" /><path d="M9 5q2 2 0 5M11 3q3 4 0 9M13 2q4 5 0 11" stroke="#fff" />
            </svg>
          </TrayButton>
          <Clock dateTime="2016-03-18T18:31">18:31<br />18/03/2016</Clock>
        </Tray>
      </Taskbar>
    </Screen>
  );
}
